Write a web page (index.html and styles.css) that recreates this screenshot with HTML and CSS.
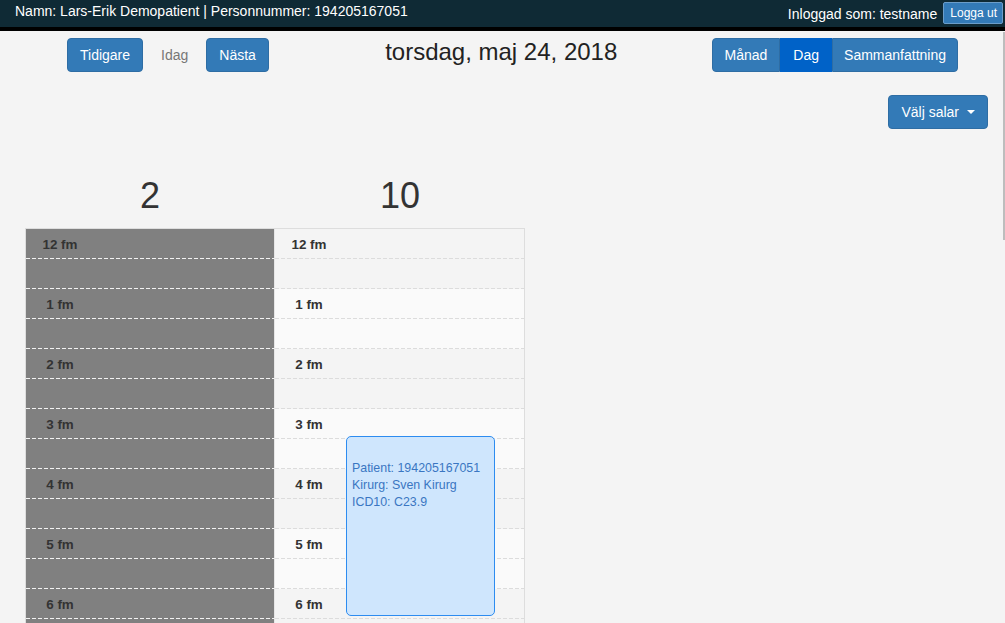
FILE: index.html
```html
<!DOCTYPE html>
<html lang="sv">
<head>
<meta charset="utf-8">
<title>Kalender</title>
<link rel="stylesheet" href="styles.css">
</head>
<body>
<header class="topbar">
  <div class="patient">Namn: Lars-Erik Demopatient | Personnummer: 194205167051</div>
  <div class="user">
    <span class="user-name">Inloggad som: testname</span>
    <button class="logout">Logga ut</button>
  </div>
</header>

<div class="toolbar">
  <div class="nav-left">
    <button class="btn">Tidigare</button>
    <button class="btn-link">Idag</button>
    <button class="btn">Nästa</button>
  </div>
  <h2 class="title">torsdag, maj 24, 2018</h2>
  <div class="btn-group">
    <button class="btn grp first">Månad</button>
    <button class="btn grp active">Dag</button>
    <button class="btn grp last">Sammanfattning</button>
  </div>
</div>

<div class="room-row">
  <button class="btn dropdown">Välj salar <span class="caret"></span></button>
</div>

<div class="calendar">
  <div class="cal-head">
    <div class="room-num">2</div>
    <div class="room-num">10</div>
  </div>
  <div class="cal-body">
    <div class="col closed">
      <div class="hour"><div class="slot"><span class="lbl">12 fm</span></div><div class="slot"></div></div>
      <div class="hour"><div class="slot"><span class="lbl">1 fm</span></div><div class="slot"></div></div>
      <div class="hour"><div class="slot"><span class="lbl">2 fm</span></div><div class="slot"></div></div>
      <div class="hour"><div class="slot"><span class="lbl">3 fm</span></div><div class="slot"></div></div>
      <div class="hour"><div class="slot"><span class="lbl">4 fm</span></div><div class="slot"></div></div>
      <div class="hour"><div class="slot"><span class="lbl">5 fm</span></div><div class="slot"></div></div>
      <div class="hour"><div class="slot"><span class="lbl">6 fm</span></div><div class="slot"></div></div>
      <div class="hour"><div class="slot"></div><div class="slot"></div></div>
    </div>
    <div class="col open">
      <div class="hour"><div class="slot"><span class="lbl">12 fm</span></div><div class="slot"></div></div>
      <div class="hour"><div class="slot"><span class="lbl">1 fm</span></div><div class="slot"></div></div>
      <div class="hour"><div class="slot"><span class="lbl">2 fm</span></div><div class="slot"></div></div>
      <div class="hour"><div class="slot"><span class="lbl">3 fm</span></div><div class="slot"></div></div>
      <div class="hour"><div class="slot"><span class="lbl">4 fm</span></div><div class="slot"></div></div>
      <div class="hour"><div class="slot"><span class="lbl">5 fm</span></div><div class="slot"></div></div>
      <div class="hour"><div class="slot"><span class="lbl">6 fm</span></div><div class="slot"></div></div>
      <div class="hour"><div class="slot"></div><div class="slot"></div></div>
      <div class="event">
        <div class="event-time"></div>
        <div>Patient: 194205167051</div>
        <div>Kirurg: Sven Kirurg</div>
        <div>ICD10: C23.9</div>
      </div>
    </div>
  </div>
</div>

<div class="scroll-thumb"></div>
</body>
</html>
```

FILE: styles.css
```css
html, body {
  margin: 0;
  padding: 0;
  overflow: hidden;
  height: 623px;
}
body {
  background: #f4f4f4;
  font-family: "Liberation Sans", Arial, sans-serif;
  font-size: 14px;
  color: #333;
  position: relative;
}
button {
  font-family: inherit;
}

/* top bar */
.topbar {
  display: flex;
  justify-content: space-between;
  align-items: flex-start;
  height: 27px;
  background: #0f2a35;
  border-bottom: 4px solid #000;
  color: #fff;
  padding: 0 2px 0 15px;
}
.patient {
  line-height: 18px;
  padding-top: 2px;
}
.user {
  display: flex;
  align-items: flex-start;
  gap: 6px;
  padding-top: 2px;
}
.user-name {
  line-height: 18px;
  padding-top: 3px;
}
.logout {
  background: #337ab7;
  color: #fff;
  border: 1px solid #6b9dc9;
  border-radius: 2px;
  font-size: 12px;
  line-height: 14px;
  padding: 3px 5px 3px 6px;
  height: 22px;
}

/* toolbar */
.toolbar {
  display: flex;
  align-items: flex-start;
  margin-top: 7px;
  padding: 0 47px 0 67px;
}
.nav-left {
  display: flex;
  gap: 5px;
}
.btn {
  background: #337ab7;
  color: #fff;
  border: 1px solid #2e6da4;
  border-radius: 4px;
  font-size: 14px;
  line-height: 20px;
  padding: 6px 12px;
}
.btn-link {
  background: none;
  border: 1px solid transparent;
  color: #777;
  font-size: 14px;
  line-height: 20px;
  padding: 6px 12px;
}
.title {
  flex: 1;
  margin: 2px 0 0;
  padding-left: 22px;
  text-align: center;
  font-size: 24px;
  font-weight: normal;
  line-height: 24px;
  color: #222;
}
.btn-group {
  display: flex;
}
.btn.grp {
  border-radius: 0;
  border-color: #2e6da4;
}
.btn.grp.first {
  border-radius: 4px 0 0 4px;
}
.btn.grp.last {
  border-radius: 0 4px 4px 0;
  padding: 6px 11px;
}
.btn.grp.active {
  background: #0062c8;
  border-color: #0062c8;
}

/* rooms dropdown */
.room-row {
  display: flex;
  justify-content: flex-end;
  margin-top: 23px;
  padding-right: 17px;
}
.dropdown {
  display: flex;
  align-items: center;
}
.caret {
  display: inline-block;
  margin-left: 8px;
  width: 0;
  height: 0;
  border-left: 4px solid transparent;
  border-right: 4px solid transparent;
  border-top: 4px solid #fff;
}

/* calendar */
.calendar {
  width: 500px;
  margin: 47px 0 0 25px;
}
.cal-head {
  display: grid;
  grid-template-columns: 1fr 1fr;
  margin-bottom: 12px;
}
.room-num {
  text-align: center;
  font-size: 36px;
  line-height: 40px;
  color: #333;
}
.cal-body {
  display: grid;
  grid-template-columns: 1fr 1fr;
  border: 1px solid #ddd;
  border-bottom: none;
}
.col {
  position: relative;
}
.col.closed {
  background: #808080;
  border-right: 1px solid #e6e6e6;
}
.col.open .hour:nth-child(odd) {
  background: #f4f4f4;
}
.col.open .hour:nth-child(even) {
  background: #fafafa;
}
.slot {
  height: 30px;
  box-sizing: border-box;
  display: flex;
  align-items: flex-start;
  background-repeat: no-repeat;
  background-position: left bottom;
  background-size: 100% 1px;
}
.closed .slot {
  background-image: repeating-linear-gradient(90deg, #f2f2f2 0 4px, transparent 4px 6px);
}
.open .slot {
  background-image: repeating-linear-gradient(90deg, #dcdcdc 0 4px, transparent 4px 6px);
}
.lbl {
  width: 68px;
  text-align: center;
  font-size: 13.4px;
  font-weight: bold;
  line-height: 31px;
  color: #333;
}

.event {
  position: absolute;
  top: 207px;
  left: 71px;
  width: 149px;
  height: 180px;
  box-sizing: border-box;
  background: #cfe6fd;
  border: 1px solid #2d8cf0;
  border-radius: 5px;
  padding: 6px 5px 4px;
  color: #3a76c2;
  font-size: 12.4px;
  line-height: 17px;
}
.event-time {
  height: 17px;
}

.scroll-thumb {
  position: absolute;
  right: 0;
  top: 32px;
  width: 2px;
  height: 208px;
  background: #bdbdbd;
}
```
